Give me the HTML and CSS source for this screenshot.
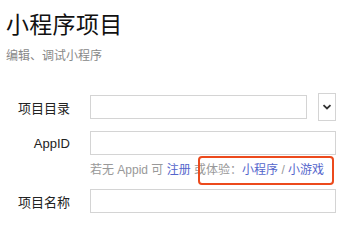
FILE: index.html
```html
<!DOCTYPE html>
<html>
<head>
<meta charset="utf-8">
<link rel="stylesheet" href="styles.css">
</head>
<body>
<div class="page">
  <h1 class="title">小程序项目</h1>
  <p class="subtitle">编辑、调试小程序</p>
  <div class="form">
    <div class="row row-dir">
      <label class="label">项目目录</label>
      <div class="field field-dir">
        <div class="input input-dir"></div>
        <div class="select-btn">
          <svg width="10" height="6" viewBox="0 0 10 6"><path d="M1.5 1.2 L5 4.5 L8.5 1.2" fill="none" stroke="#333" stroke-width="1.8"/></svg>
        </div>
      </div>
    </div>
    <div class="row row-appid">
      <label class="label">AppID</label>
      <div class="field">
        <div class="input"></div>
      </div>
    </div>
    <div class="hint">若无 Appid 可 <a class="link">注册</a> 或体验：<a class="link">小程序</a> / <a class="link">小游戏</a>
      <span class="highlight"></span>
    </div>
    <div class="row row-name">
      <label class="label">项目名称</label>
      <div class="field">
        <div class="input"></div>
      </div>
    </div>
  </div>
</div>
</body>
</html>
```
FILE: styles.css
```css
html, body {
  margin: 0;
  padding: 0;
  background: #fff;
}
body {
  font-family: "Liberation Sans", "Noto Sans CJK SC", sans-serif;
  color: #111;
}
.page {
  padding: 11px 0 0 6px;
  position: relative;
}
.title {
  margin: 0;
  font-size: 23px;
  font-weight: normal;
  line-height: 28px;
  letter-spacing: 0.3px;
}
.subtitle {
  margin: 9px 0 0 0;
  font-size: 12px;
  line-height: 16px;
  color: #888;
}
.form {
  margin-top: 29px;
  position: relative;
}
.row {
  display: flex;
  align-items: center;
}
.label {
  width: 64px;
  text-align: right;
  font-size: 13px;
  color: #222;
  flex: none;
}
.field {
  margin-left: 20px;
  display: flex;
  align-items: center;
}
.field-dir {
  gap: 11px;
}
.input {
  width: 244px;
  height: 22px;
  border: 1px solid #d4d4d4;
  background: #fff;
}
.input-dir {
  width: 215px;
}
.select-btn {
  width: 16px;
  height: 26px;
  border: 1px solid #d4d4d4;
  display: flex;
  align-items: center;
  justify-content: center;
}
.row-appid {
  margin-top: 10px;
}
.hint {
  margin: 7px 0 0 84px;
  font-size: 12px;
  line-height: 16px;
  color: #999;
  position: relative;
  white-space: nowrap;
}
.link {
  color: #5566cc;
}
.highlight {
  position: absolute;
  left: 108px;
  top: -6px;
  width: 132px;
  height: 25px;
  border: 2.5px solid #ec4a1c;
  border-radius: 4px;
}
.row-name {
  margin-top: 11px;
}
```
